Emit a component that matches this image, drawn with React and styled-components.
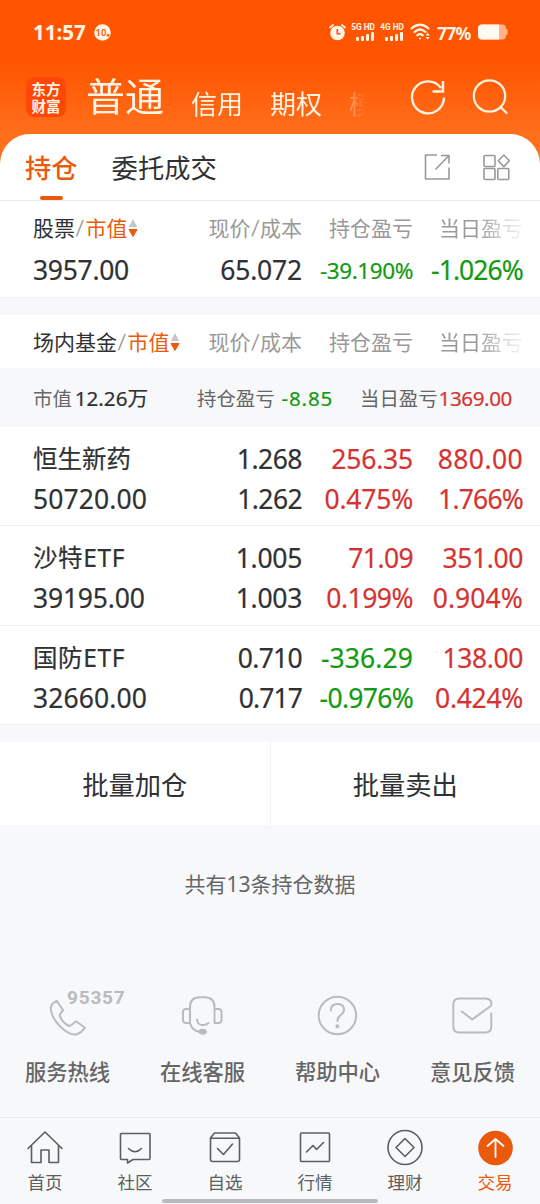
import React from 'react';
import styled, { createGlobalStyle } from 'styled-components';

const GlobalStyle = createGlobalStyle`
  * {
    box-sizing: border-box;
  }

  body {
    margin: 0;
    background: #f7f8fa;
    font-family: 'Noto Sans', 'Noto Sans CJK SC', sans-serif;
    color: #333;
  }
`;

const colors = {
  text: '#303133',
  up: '#d43431',
  down: '#129a12',
  brand: '#ea5a0c',
};

const Page = styled.div`
  width: 540px;
  height: 1204px;
  display: flex;
  flex-direction: column;
  overflow: hidden;
  background: #f7f8fa;
`;

const Header = styled.header`
  height: 164px;
  margin-bottom: -30px;
  flex: none;
  background: linear-gradient(#ff5500 0, #ff5500 62px, #ff6f1c 134px);
  color: #fff3e4;
`;

const StatusBar = styled.div`
  height: 64px;
  padding: 0 32px 0 33px;
  display: flex;
  align-items: center;
`;

const Clock = styled.span`
  width: 54px;
  font-size: 20.5px;
  font-weight: 700;
  line-height: 24px;
  letter-spacing: 0;
  margin-right: 7px;
`;

const StatusIcons = styled.div`
  margin-left: auto;
  display: flex;
  align-items: center;
`;

const Signal = styled.div`
  display: flex;
  flex-direction: column;
  align-items: flex-end;
  width: 25px;
  margin-right: ${props => props.$gap}px;
  font: 700 8.3px/9px Roboto, sans-serif;
  white-space: nowrap;
`;

const Battery = styled.span`
  width: 34px;
  font: 700 17.5px/22px 'Noto Sans', sans-serif;
  letter-spacing: -0.7px;
  margin: 2px 7px 0 6px;
`;

const NavBar = styled.div`
  height: 70px;
  padding-left: 26px;
  display: flex;
`;

const Logo = styled.div`
  width: 40px;
  height: 40px;
  margin-top: 13px;
  padding-top: 3px;
  border-radius: 8px;
  background: #ff4808;
  font: 700 14.5px/17px 'Noto Sans CJK SC', sans-serif;
  text-align: center;
`;

const Accounts = styled.nav`
  display: flex;
  align-items: flex-start;
  width: 297px;
  height: 70px;
  margin-left: 20px;
  overflow: hidden;
  white-space: nowrap;
  mask-image: linear-gradient(90deg, #000 240px, transparent 280px);
`;

const Account = styled.span`
  font-size: ${props => (props.$active ? 39 : 26)}px;
  line-height: ${props => (props.$active ? 64 : 81)}px;
  margin-right: 27px;
`;

const NavIcons = styled.div`
  display: flex;
  margin: 14px 0 0 25px;
  gap: 23px;
`;

const Tabs = styled.div`
  height: 67px;
  flex: none;
  padding: 0 29px 0 25px;
  display: flex;
  border-bottom: 1px solid #e8e9eb;
  border-radius: 30px 30px 0 0;
  background: #fff;
`;

const Tab = styled.div`
  display: flex;
  flex-direction: column;
  align-items: center;
  margin-right: 34px;
  font-size: 26.3px;
  line-height: 68px;
  height: 66px;
  font-weight: ${props => (props.$active ? 500 : 400)};
  color: ${props => (props.$active ? colors.brand : colors.text)};

  &::after {
    content: '';
    display: ${props => (props.$active ? 'block' : 'none')};
    flex: none;
    width: 23px;
    height: 4px;
    margin-top: -6px;
    border-radius: 2px;
    background: ${colors.brand};
  }
`;

const TabTools = styled.div`
  margin: 18px 0 0 auto;
  display: flex;
  gap: 29px;
`;

const Section = styled.section`
  flex: none;
  background: #fff;
  margin-bottom: 17px;
`;

const Row = styled.div`
  display: grid;
  grid-template-columns: 1fr 110px 111px 110px;
  align-items: center;
  padding: 0 17px 0 33px;
`;

const HeadRow = styled(Row)`
  height: 53px;
  font-family: Lato, 'Noto Sans CJK SC', sans-serif;
  font-size: 21px;
  line-height: 54px;
  color: #999;
`;

const HeadCell = styled.span`
  text-align: right;
  white-space: nowrap;
  ${props => props.$fade && `mask-image: linear-gradient(
    90deg, #000 64px, rgba(0, 0, 0, 0.4) 90px, rgba(0, 0, 0, 0.12) 109px
  );`}
`;

const SortCell = styled.span`
  display: flex;
  align-items: center;
  white-space: nowrap;

  b {
    font-weight: 400;
    color: ${colors.text};
  }

  em {
    margin-left: 1px;
    font-style: normal;
    color: ${colors.brand};
  }

  svg {
    margin-bottom: 1px;
  }
`;

const Line = styled(Row)`
  height: 40px;
`;

const Holding = styled.div`
  height: 99.3px;
  padding-top: 12px;
  border-bottom: 1px solid #f0f1f3;
`;

const StockHolding = styled.div`
  height: 44px;
  border-bottom: 1px solid #f0f1f3;

  ${Line} {
    height: 33px;
    line-height: 33px;
  }
`;

const ValueText = styled.span`
  font-size: ${props => props.$size}px;
  line-height: inherit;
  letter-spacing: ${props => props.$tracking}px;
  text-align: ${props => (props.$left ? 'left' : 'right')};
  color: ${props => colors[props.$tone]};
  white-space: nowrap;
  -webkit-text-stroke: 0.2px currentColor;
`;

const FundLine = styled(Line)`
  line-height: 40px;
`;

const Summary = styled.div`
  height: 59px;
  padding-left: 33px;
  display: grid;
  grid-template-columns: 164px 163px auto;
  background: #f7f8fa;
  font-size: 19.4px;
  line-height: 61px;
  color: #666;
`;

const SummaryValue = styled.span`
  font-size: 20.6px;
  letter-spacing: ${props => props.$tracking || 0}px;
  margin-left: ${props => props.$gap}px;
  color: ${props => colors[props.$tone || 'text']};
  -webkit-text-stroke: 0.2px currentColor;
`;

const Actions = styled.div`
  flex: none;
  height: 83px;
  display: flex;
  background: #fff;
`;

const Action = styled.button`
  flex: 1;
  border: 0;
  padding: 1px 0 0;
  background: none;
  font: inherit;
  font-size: 26.3px;
  color: ${colors.text};

  & + & {
    border-left: 1px solid #f0f1f3;
  }
`;

const Count = styled.p`
  margin: 43px 0 0;
  font-size: 21px;
  line-height: 32px;
  text-align: center;
  color: #666;
`;

const Services = styled.div`
  display: flex;
  margin-top: 93px;
`;

const Service = styled.div`
  position: relative;
  width: 135px;
  display: flex;
  flex-direction: column;
  align-items: center;
  font-size: 21.3px;
  font-weight: 500;
  line-height: 32px;
  color: #666;

  svg {
    margin-bottom: 18px;
  }
`;

const Hotline = styled.span`
  position: absolute;
  left: 67px;
  top: -5px;
  font: 700 19px/20px Roboto, sans-serif;
  letter-spacing: 0.8px;
  color: #b9bbbd;
`;

const TabBar = styled.footer`
  flex: none;
  height: 87px;
  margin-top: auto;
  display: flex;
  border-top: 1px solid #e6e7e9;
  position: relative;
`;

const TabItem = styled.div`
  flex: 1;
  padding-top: 10px;
  display: flex;
  flex-direction: column;
  align-items: center;
  font-size: 17.5px;
  line-height: 26px;
  color: ${props => (props.$active ? colors.brand : '#5c5e60')};

  svg {
    margin-bottom: 1px;
  }
`;

const HomeIndicator = styled.div`
  position: absolute;
  left: 162px;
  bottom: 1px;
  width: 216px;
  height: 4px;
  border-radius: 2px;
  background: #b9babc;
`;

const Icon = ({ size = 40, w = 1.6, color = 'currentColor', children, ...rest }) => (
  <svg width={size} height={size} viewBox={`0 0 ${size} ${size}`} fill="none" stroke={color}
    strokeWidth={w} strokeLinecap="round" strokeLinejoin="round" {...rest}>
    {children}
  </svg>
);

const SignalBars = () => (
  <svg width="19" height="9" viewBox="0 0 19 9" fill="currentColor">
    <rect x="0" y="5" width="3" height="4" rx="1" />
    <rect x="5" y="4" width="3" height="5" rx="1" />
    <rect x="10" y="2" width="3" height="7" rx="1" />
    <rect x="15" y="0" width="3" height="9" rx="1" />
  </svg>
);

const SortIcon = () => (
  <svg width="10" height="20" viewBox="0 0 10 20">
    <path d="M5 1L9.2 9H0.8Z" fill="#c4c6c9" />
    <path d="M1 11.5H9L5 18.5Z" fill={colors.brand} stroke={colors.brand} strokeLinejoin="round" />
  </svg>
);

const tracking = {
  '沙特ETF': 0.6, '国防ETF': 0.6,
  '50720.00': 0.1, '32660.00': 0.1, '39195.00': -0.2, '3957.00': -0.3,
  '65.072': -0.2, '1.268': -0.5, '1.262': -0.6, '1.005': -0.3, '1.003': -0.3,
  '0.710': -0.7, '0.717': -0.9,
  '256.35': -0.2, '880.00': 0.4, '71.09': -0.6, '351.00': -0.4, '138.00': -0.4,
  '-336.29': 0.1, '0.475%': -0.2, '1.766%': -0.8, '0.199%': -0.5, '0.904%': 0.1,
  '0.424%': -0.3, '-0.976%': -0.7, '-1.026%': -0.9, '-39.190%': -0.4,
};

function Value({ children, tone = 'text', size = 26.5, left }) {
  return (
    <ValueText $tone={tone} $size={size} $left={left} $tracking={tracking[children] || 0}>
      {children}
    </ValueText>
  );
}

const funds = [
  {
    name: '恒生新药', amount: '50720.00', price: '1.268', cost: '1.262',
    profit: '256.35', rate: '0.475%', dayProfit: '880.00', dayRate: '1.766%', tone: 'up',
  },
  {
    name: '沙特ETF', amount: '39195.00', price: '1.005', cost: '1.003',
    profit: '71.09', rate: '0.199%', dayProfit: '351.00', dayRate: '0.904%', tone: 'up',
  },
  {
    name: '国防ETF', amount: '32660.00', price: '0.710', cost: '0.717',
    profit: '-336.29', rate: '-0.976%', dayProfit: '138.00', dayRate: '0.424%', tone: 'down',
  },
];

function TableHead({ title }) {
  return (
    <HeadRow>
      <SortCell>
        <b>{title}</b>/<em>市值</em>
        <SortIcon />
      </SortCell>
      <HeadCell>现价/成本</HeadCell>
      <HeadCell>持仓盈亏</HeadCell>
      <HeadCell $fade>当日盈亏</HeadCell>
    </HeadRow>
  );
}

const services = [
  {
    label: '服务热线',
    hotline: '95357',
    icon: (
      <path d="M11.700 7.800C8 9.500 5.500 12.500 5.800 16C6.500 25 14 33.500 20.500 38C25 41.200 29 42.200 32.500 41C35.500 39.800 38 37.500 40 34.800L31 28.300C28.500 29.500 26.500 33.600 24 33C20 31 16 27 14.800 22.500C14.500 20.500 17.500 19 18 17Z" />
    ),
  },
  {
    label: '在线客服',
    icon: (
      <>
        <path d="M10 30V14Q10 4.200 20 4.200H24.500Q34.500 4.200 34.500 14V30M10 16H6Q3 16 3 19V27Q3 30 6 30H10M34.500 16H38.500Q41.500 16 41.500 19V27Q41.500 30 38.500 30H34.500" />
        <path d="M10 30Q12 38 20 38.800M17 26.500Q17.500 31.500 22 32Q26.500 32.300 28.500 30" />
        <ellipse cx="22.700" cy="38.800" rx="3.200" ry="2" fill="#b9bbbd" />
      </>
    ),
  },
  {
    label: '帮助中心',
    icon: (
      <>
        <circle cx="22.400" cy="22.500" r="18.700" />
        <path d="M15.800 17.500Q16 11 22.400 11Q29 11 29 16.800Q29 19.800 25.500 22.300Q22.400 24.300 22.400 28" />
        <circle cx="22.400" cy="33.200" r="1" fill="#b9bbbd" />
      </>
    ),
  },
  {
    label: '意见反馈',
    icon: (
      <path d="M41.300 20.500V33.500Q41.300 39.500 35.300 39.500H9.300Q3.300 39.500 3.300 33.500V11.500Q3.300 5.500 9.300 5.500H35.300Q39.300 5.500 41.300 8.500V12.500L22.300 26.500L11.700 18.500" />
    ),
  },
];

const tabItems = [
  { label: '首页', icon: <path d="M3 20.500L20 4L37 20.500M6.500 17.500V34.500H16V22H24V34.500H33.500V17.500" /> },
  {
    label: '社区',
    icon: <path d="M6 5.500H34Q35 5.500 35 6.500V30.500Q35 31.500 34 31.500H18L12.500 35V31.500H6.500Q5.500 31.500 5.500 30.500V6M13.500 20.500Q20 27 26.500 20.500" />,
  },
  {
    label: '自选',
    icon: <path d="M5.500 10L9.500 5H30.500L34.500 10V31.500Q34.500 33.500 32.500 33.500H7.500Q5.500 33.500 5.500 31.500ZM5.500 10.300H34.500M12.500 20.500L18.500 26.500L27.500 16" />,
  },
  {
    label: '行情',
    icon: (
      <>
        <rect x="5.500" y="5" width="29" height="28.500" rx="1" />
        <path d="M11.500 24L18 17.500L21.500 21.500L28.500 14.500" />
      </>
    ),
  },
  {
    label: '理财',
    icon: (
      <>
        <circle cx="20" cy="19.500" r="17" />
        <path d="M20 10.500L29 19.500L20 28.500L11 19.500Z" />
      </>
    ),
  },
  {
    label: '交易',
    active: true,
    icon: (
      <>
        <circle cx="20.500" cy="20" r="16.500" fill={colors.brand} stroke={colors.brand} />
        <path d="M20.500 29V11.500M12.500 18L20.500 11L28.500 18" stroke="#fff" strokeWidth="1.800" />
      </>
    ),
  },
];

export default function App() {
  return (
    <Page>
      <GlobalStyle />
      <Header>
        <StatusBar>
          <Clock>11:57</Clock>
          <svg width="17" height="17" viewBox="0 0 17 17">
            <circle cx="8.500" cy="8.500" r="8.300" fill="#fff3e4" />
            <text x="1.600" y="12.200" fontSize="9.500" fontFamily="Roboto" fontWeight="500" fill="#ff5500">10</text>
            <circle cx="14" cy="11.200" r="1.300" fill="#ff5500" />
          </svg>
          <StatusIcons>
            <svg width="17" height="18" viewBox="0 0 17 18" style={{ marginRight: 4 }}>
              <circle cx="8.500" cy="10" r="7.300" fill="#fff3e4" />
              <path d="M1 4.500L4 2M16 4.500L13 2" stroke="#fff3e4" strokeWidth="1.800" strokeLinecap="round" />
              <path d="M8.300 6V10.800H11.500" stroke="#ff5500" strokeWidth="1.600" fill="none" />
            </svg>
            <Signal $gap={4}>5G HD<SignalBars /></Signal>
            <Signal $gap={6}>4G HD<SignalBars /></Signal>
            <Icon size={21} w={2.2}>
              <path d="M1.500 6.500Q10 -1 18.500 6.500M4.500 10Q10 5 15.500 10M7.300 13.300Q10 11 12.700 13.300" />
              <circle cx="10" cy="16.500" r="1" fill="currentColor" stroke="none" />
              <path d="M15.700 13.500L17.700 10.800L19.700 13.500ZM15.700 15L17.700 17.700L19.700 15Z" fill="currentColor" stroke="none" />
            </Icon>
            <Battery>77%</Battery>
            <svg width="30" height="16" viewBox="0 0 30 16">
              <rect x="0" y="0.500" width="28" height="15" rx="4" fill="#ffb48a" />
              <rect x="27.500" y="5" width="2" height="6" rx="1" fill="#ffb48a" />
              <path d="M4 .5H21V15.500H4Q0 15.500 0 11.500V4.500Q0 .5 4 .5Z" fill="#fff9f2" />
            </svg>
          </StatusIcons>
        </StatusBar>
        <NavBar>
          <Logo>东方<br />财富</Logo>
          <Accounts>
            <Account $active>普通</Account>
            <Account>信用</Account>
            <Account>期权</Account>
            <Account>模拟</Account>
          </Accounts>
          <NavIcons>
            <Icon w={2.4} strokeLinejoin="miter" strokeLinecap="butt">
              <path d="M36 19.500A16 16 0 1 1 33 10M24.500 13.500H35V3" />
            </Icon>
            <Icon w={2.2}>
              <circle cx="18.500" cy="18" r="15.700" />
              <path d="M30 29.500L35.500 35" />
            </Icon>
          </NavIcons>
        </NavBar>
      </Header>

      <Tabs>
        <Tab $active>持仓</Tab>
        <Tab>委托成交</Tab>
        <TabTools>
          <Icon size={30} color="#999" strokeLinecap="butt">
            <path d="M15 3H3.500V27H27V15.500M19 3.500H27V11.500M26.500 4L13.500 17.500" />
          </Icon>
          <Icon size={30} color="#999">
            <rect x="3" y="3.500" width="11" height="11" rx="1" />
            <rect x="3" y="16.500" width="11" height="11" rx="1" />
            <rect x="16.800" y="16.500" width="11" height="11" rx="1" />
            <path d="M22.800 3L28.300 8.800L22.800 14.600L17.300 8.800Z" />
          </Icon>
        </TabTools>
      </Tabs>

      <Section>
        <TableHead title="股票" />
        <StockHolding>
          <Line>
            <Value left>3957.00</Value>
            <Value>65.072</Value>
            <Value tone="down" size={22.5}>-39.190%</Value>
            <Value tone="down">-1.026%</Value>
          </Line>
        </StockHolding>
      </Section>

      <Section>
        <TableHead title="场内基金" />
        <Summary>
          <span>市值<SummaryValue $gap={3}>12.26万</SummaryValue></span>
          <span>持仓盈亏<SummaryValue $gap={7} $tracking={0.8} $tone="down">-8.85</SummaryValue></span>
          <span>当日盈亏<SummaryValue $gap={1} $tracking={-0.4} $tone="up">1369.00</SummaryValue></span>
        </Summary>
        {funds.map(f => (
          <Holding key={f.name}>
            <FundLine>
              <Value left size={24.5}>{f.name}</Value>
              <Value>{f.price}</Value>
              <Value tone={f.tone}>{f.profit}</Value>
              <Value tone="up">{f.dayProfit}</Value>
            </FundLine>
            <FundLine>
              <Value left>{f.amount}</Value>
              <Value>{f.cost}</Value>
              <Value tone={f.tone}>{f.rate}</Value>
              <Value tone="up">{f.dayRate}</Value>
            </FundLine>
          </Holding>
        ))}
      </Section>

      <Actions>
        <Action>批量加仓</Action>
        <Action>批量卖出</Action>
      </Actions>

      <Count>共有13条持仓数据</Count>

      <Services>
        {services.map(s => (
          <Service key={s.label}>
            <Icon size={45} w={2} color="#b9bbbd">{s.icon}</Icon>
            {s.hotline && <Hotline>{s.hotline}</Hotline>}
            {s.label}
          </Service>
        ))}
      </Services>

      <TabBar>
        {tabItems.map(t => (
          <TabItem key={t.label} $active={t.active}>
            <Icon>{t.icon}</Icon>
            {t.label}
          </TabItem>
        ))}
        <HomeIndicator />
      </TabBar>
    </Page>
  );
}
